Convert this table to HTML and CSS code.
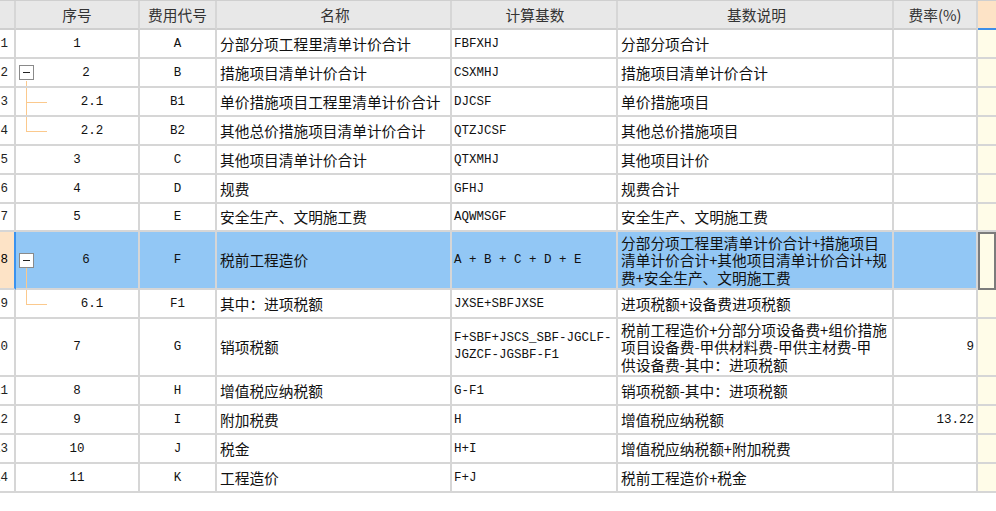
FILE: index.html
```html
<!DOCTYPE html>
<html lang="zh">
<head>
<meta charset="utf-8">
<title>费用汇总</title>
<link rel="stylesheet" href="styles.css">
</head>
<body>
<div class="grid">
  <div class="row head">
    <div class="c c0"></div>
    <div class="c c1 ctr">序号</div>
    <div class="c c2 ctr">费用代号</div>
    <div class="c c3 ctr">名称</div>
    <div class="c c4 ctr">计算基数</div>
    <div class="c c5 ctr">基数说明</div>
    <div class="c c6 ctr">费率(%)</div>
    <div class="c c7"></div>
  </div>

  <div class="row">
    <div class="c c0 m"><span>1</span></div>
    <div class="c c1 m ctr">1</div>
    <div class="c c2 m ctr">A</div>
    <div class="c c3">分部分项工程里清单计价合计</div>
    <div class="c c4 m">FBFXHJ</div>
    <div class="c c5">分部分项合计</div>
    <div class="c c6"></div>
    <div class="c c7"></div>
  </div>

  <div class="row">
    <div class="c c0 m"><span>2</span></div>
    <div class="c c1 m parent"><span class="tog"></span><span class="val">2</span></div>
    <div class="c c2 m ctr">B</div>
    <div class="c c3">措施项目清单计价合计</div>
    <div class="c c4 m">CSXMHJ</div>
    <div class="c c5">措施项目清单计价合计</div>
    <div class="c c6"></div>
    <div class="c c7"></div>
  </div>

  <div class="row">
    <div class="c c0 m"><span>3</span></div>
    <div class="c c1 m child mid"><span class="val">2.1</span></div>
    <div class="c c2 m ctr">B1</div>
    <div class="c c3">单价措施项目工程里清单计价合计</div>
    <div class="c c4 m">DJCSF</div>
    <div class="c c5">单价措施项目</div>
    <div class="c c6"></div>
    <div class="c c7"></div>
  </div>

  <div class="row">
    <div class="c c0 m"><span>4</span></div>
    <div class="c c1 m child last"><span class="val">2.2</span></div>
    <div class="c c2 m ctr">B2</div>
    <div class="c c3">其他总价措施项目清单计价合计</div>
    <div class="c c4 m">QTZJCSF</div>
    <div class="c c5">其他总价措施项目</div>
    <div class="c c6"></div>
    <div class="c c7"></div>
  </div>

  <div class="row">
    <div class="c c0 m"><span>5</span></div>
    <div class="c c1 m ctr">3</div>
    <div class="c c2 m ctr">C</div>
    <div class="c c3">其他项目清单计价合计</div>
    <div class="c c4 m">QTXMHJ</div>
    <div class="c c5">其他项目计价</div>
    <div class="c c6"></div>
    <div class="c c7"></div>
  </div>

  <div class="row">
    <div class="c c0 m"><span>6</span></div>
    <div class="c c1 m ctr">4</div>
    <div class="c c2 m ctr">D</div>
    <div class="c c3">规费</div>
    <div class="c c4 m">GFHJ</div>
    <div class="c c5">规费合计</div>
    <div class="c c6"></div>
    <div class="c c7"></div>
  </div>

  <div class="row short">
    <div class="c c0 m"><span>7</span></div>
    <div class="c c1 m ctr">5</div>
    <div class="c c2 m ctr">E</div>
    <div class="c c3">安全生产、文明施工费</div>
    <div class="c c4 m">AQWMSGF</div>
    <div class="c c5">安全生产、文明施工费</div>
    <div class="c c6"></div>
    <div class="c c7"></div>
  </div>

  <div class="row tall sel">
    <div class="c c0 m"><span>8</span></div>
    <div class="c c1 m parent"><span class="tog"></span><span class="val">6</span></div>
    <div class="c c2 m ctr">F</div>
    <div class="c c3">税前工程造价</div>
    <div class="c c4 m">A + B + C + D + E</div>
    <div class="c c5 multi">分部分项工程里清单计价合计+措施项目<br>清单计价合计+其他项目清单计价合计+规<br>费+安全生产、文明施工费</div>
    <div class="c c6"></div>
    <div class="c c7 focus"></div>
  </div>

  <div class="row">
    <div class="c c0 m"><span>9</span></div>
    <div class="c c1 m child last"><span class="val">6.1</span></div>
    <div class="c c2 m ctr">F1</div>
    <div class="c c3">其中：进项税额</div>
    <div class="c c4 m">JXSE+SBFJXSE</div>
    <div class="c c5">进项税额+设备费进项税额</div>
    <div class="c c6"></div>
    <div class="c c7"></div>
  </div>

  <div class="row tall">
    <div class="c c0 m"><span>10</span></div>
    <div class="c c1 m ctr">7</div>
    <div class="c c2 m ctr">G</div>
    <div class="c c3">销项税额</div>
    <div class="c c4 m multi">F+SBF+JSCS_SBF-JGCLF-<br>JGZCF-JGSBF-F1</div>
    <div class="c c5 multi">税前工程造价+分部分项设备费+组价措施<br>项目设备费-甲供材料费-甲供主材费-甲<br>供设备费-其中：进项税额</div>
    <div class="c c6 m num">9</div>
    <div class="c c7"></div>
  </div>

  <div class="row">
    <div class="c c0 m"><span>11</span></div>
    <div class="c c1 m ctr">8</div>
    <div class="c c2 m ctr">H</div>
    <div class="c c3">增值税应纳税额</div>
    <div class="c c4 m">G-F1</div>
    <div class="c c5">销项税额-其中：进项税额</div>
    <div class="c c6"></div>
    <div class="c c7"></div>
  </div>

  <div class="row">
    <div class="c c0 m"><span>12</span></div>
    <div class="c c1 m ctr">9</div>
    <div class="c c2 m ctr">I</div>
    <div class="c c3">附加税费</div>
    <div class="c c4 m">H</div>
    <div class="c c5">增值税应纳税额</div>
    <div class="c c6 m num">13.22</div>
    <div class="c c7"></div>
  </div>

  <div class="row">
    <div class="c c0 m"><span>13</span></div>
    <div class="c c1 m ctr">10</div>
    <div class="c c2 m ctr">J</div>
    <div class="c c3">税金</div>
    <div class="c c4 m">H+I</div>
    <div class="c c5">增值税应纳税额+附加税费</div>
    <div class="c c6"></div>
    <div class="c c7"></div>
  </div>

  <div class="row">
    <div class="c c0 m"><span>14</span></div>
    <div class="c c1 m ctr">11</div>
    <div class="c c2 m ctr">K</div>
    <div class="c c3">工程造价</div>
    <div class="c c4 m">F+J</div>
    <div class="c c5">税前工程造价+税金</div>
    <div class="c c6"></div>
    <div class="c c7"></div>
  </div>
</div>
</body>
</html>
```

FILE: styles.css
```css
* { box-sizing: border-box; }
html, body { margin: 0; padding: 0; background: #fff; }
body {
  width: 996px;
  font-family: "Noto Sans CJK SC", "Noto Sans", sans-serif;
  font-size: 14.7px;
  color: #111;
}
.grid { width: 996px; }
.row {
  display: grid;
  grid-template-columns: 16px 124px 77px 235px 166px 276px 84px 18px;
  height: 29px;
}
.row.short { height: 28px; }
.row.tall { height: 58px; }
.row.head {
  height: 30px;
  background: #e8e8e8;
  border-top: 1px solid #cfcfcf;
  color: #333;
}
.c {
  position: relative;
  display: flex;
  align-items: center;
  border-right: 2px solid #d6d6d6;
  border-bottom: 2px solid #d6d6d6;
  white-space: nowrap;
  overflow: hidden;
  line-height: 18px;
  min-width: 0;
}
.head .c { border-bottom-color: #cfcfcf; }
.ctr { justify-content: center; }
.m {
  font-family: "Liberation Mono", "DejaVu Sans Mono", monospace;
  font-size: 12.5px;
}
.c0 {
  justify-content: flex-end;
  padding-right: 6px;
  color: #222;
}
.c3, .c5 { padding-left: 3px; }
.c4 { padding-left: 2px; }
.num { justify-content: flex-end; padding-right: 2px; }
.c7 { border-right: none; background: #fffce8; }
.head .c7 { background: #fde3c6; border-bottom-color: #3d8ee8; }
.multi { line-height: 17.5px; }

/* tree column */
.parent { padding-left: 3px; }
.tog {
  position: relative;
  flex: none;
  width: 15px;
  height: 15px;
  border: 1px solid #8a8a8a;
  background: #fff;
}
.tog::before {
  content: "";
  position: absolute;
  left: 3px;
  top: 6px;
  width: 7px;
  height: 1px;
  background: #222;
}
.val { flex: 1; text-align: center; }
.parent::after {
  content: "";
  position: absolute;
  left: 10px;
  top: calc(50% + 8px);
  bottom: -2px;
  width: 1px;
  background: #fbc98d;
}
.child { padding-left: 30px; }
.child::before {
  content: "";
  position: absolute;
  left: 10px;
  top: 0;
  width: 1px;
  background: #fbc98d;
}
.child.mid::before { bottom: -2px; }
.child.last::before { height: 50%; }
.child::after {
  content: "";
  position: absolute;
  left: 10px;
  top: 50%;
  width: 21px;
  height: 1px;
  background: #fbc98d;
}

/* selected row */
.sel .c { background: #92c7f5; }
.sel .c0 { background: #fde3c6; border-right-color: #3a92ee; color: #000; }
.sel .c7 { background: #fffce8; }
.focus { outline: 2px solid #7c7c7c; outline-offset: -2px; }
```
